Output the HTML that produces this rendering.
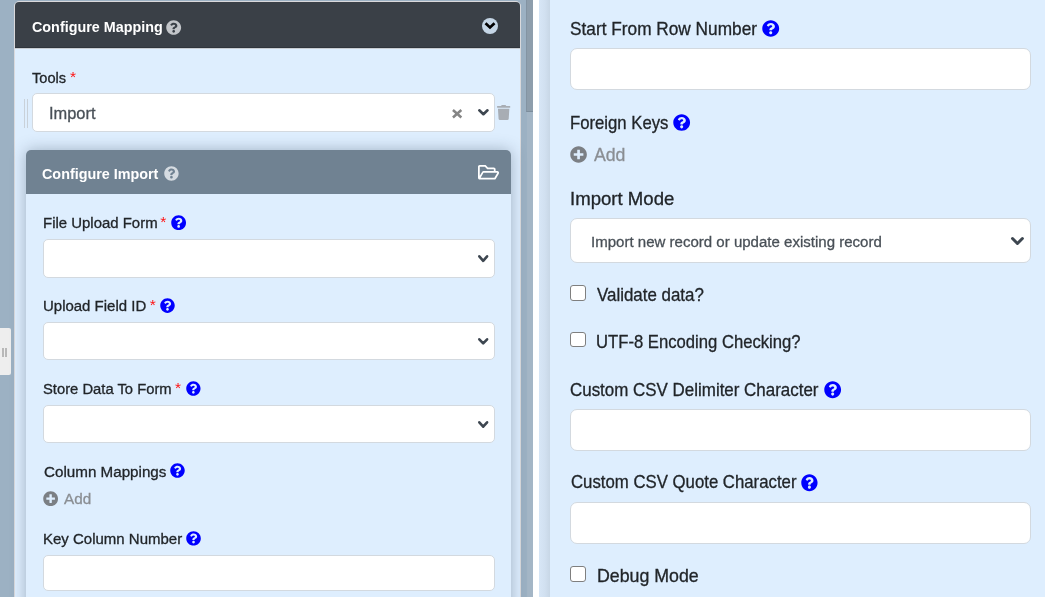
<!DOCTYPE html>
<html><head><meta charset="utf-8"><style>
*{margin:0;padding:0;box-sizing:border-box}
html,body{width:1045px;height:597px;overflow:hidden;background:#deeefe;font-family:"Liberation Sans",sans-serif;color:#212529}
.abs{position:absolute}
.t{position:absolute;white-space:nowrap;line-height:1;transform:translateZ(0);transform-origin:0 0;-webkit-text-stroke:0.3px currentColor}
.b{font-weight:bold;-webkit-text-stroke:0}
.inp{position:absolute;background:#fff;border:1px solid #d3d9df;border-radius:5px}
.cb{position:absolute;background:#fff;border:1.4px solid #7f7f7f;border-radius:3px}
svg{position:absolute;overflow:visible}
</style></head><body>
<div class="abs" style="left:0;top:0;width:527px;height:597px;background:#9cb1c3"></div>
<div class="abs" style="left:526.5px;top:0;width:6.5px;height:597px;background:#a4b6c6"></div>
<div class="abs" style="left:526px;top:0;width:7px;height:112px;background:#8e9eac;border-left:1px solid #8394a3;border-bottom:1px solid #7c8d9c"></div>
<div class="abs" style="left:533px;top:0;width:6px;height:597px;background:#fff"></div>
<div class="abs" style="left:539px;top:0;width:506px;height:597px;background:linear-gradient(90deg,#d7e6f6 0px,#d1e0f0 6px,#c8d7e6 11px,#deeefe 11px)"></div>
<div class="abs" style="left:0;top:328px;width:10.5px;height:47px;background:#eeeeee;border-radius:0 2px 2px 0"></div>
<div class="abs" style="left:2px;top:348px;width:1.5px;height:8.5px;background:#b8b8b8"></div>
<div class="abs" style="left:5.3px;top:348px;width:1.5px;height:8.5px;background:#b8b8b8"></div>
<div class="abs" style="left:14px;top:1px;width:507px;height:620px;background:#deeefe;border:1px solid #d9d9dc;border-radius:5px;overflow:hidden"><div class="abs" style="left:0;top:0;width:100%;height:46px;background:#3a4047;border-bottom:1px solid #2f353c"></div><div class="abs" style="left:0;top:46px;width:100%;height:1px;background:#c8cdd2"></div></div>
<div class="t b" style="left:31.77px;top:20.43px;font-size:14.2px;color:#ffffff;transform:translateZ(0) scaleX(1.0111)">Configure Mapping</div>
<svg style="left:166.26px;top:20.26px" width="15.38" height="15.07" viewBox="0 0 512 512" preserveAspectRatio="none"><path fill="#c2c5c9" d="M504 256c0 136.997-111.043 248-248 248S8 392.997 8 256C8 119.083 119.043 8 256 8s248 111.083 248 248zM262.655 90c-54.497 0-89.255 22.957-116.549 63.758-3.536 5.286-2.353 12.415 2.715 16.258l34.699 26.31c5.205 3.947 12.621 3.008 16.665-2.122 17.864-22.658 30.113-35.797 57.303-35.797 20.429 0 45.698 13.148 45.698 32.958 0 14.976-12.363 22.667-32.534 33.976C247.128 238.528 216 254.941 216 296v4c0 6.627 5.373 12 12 12h56c6.627 0 12-5.373 12-12v-1.333c0-28.462 83.186-29.647 83.186-106.667 0-58.002-60.165-102-116.531-102zM256 338c-25.365 0-46 20.635-46 46 0 25.364 20.635 46 46 46s46-20.636 46-46c0-25.365-20.635-46-46-46z"/></svg>
<svg style="left:482px;top:17.6px" width="16" height="16" viewBox="0 0 16 16"><circle cx="8" cy="8" r="8" fill="#c5d6e6"/><path d="M3.5 5.2 L8 9.5 L12.5 5.2" fill="none" stroke="#000" stroke-width="2.7"/></svg>
<div class="t r" style="left:31.96px;top:69.69px;font-size:15.2px;color:#212529;transform:translateZ(0) scaleX(0.9626)">Tools</div>
<div class="t" style="left:70.00px;top:69.00px;font-size:15.5px;color:#ff1010;-webkit-text-stroke:0">*</div>
<div class="abs" style="left:24px;top:99px;width:1px;height:29px;background:#c9d1d9"></div>
<div class="abs" style="left:27px;top:99px;width:1px;height:29px;background:#c9d1d9"></div>
<div class="inp" style="left:32px;top:93px;width:463px;height:39px"></div>
<div class="t r" style="left:48.99px;top:105.58px;font-size:15.9px;color:#495057;transform:translateZ(0) scaleX(1.0320)">Import</div>
<svg style="left:451.5px;top:108.8px" width="10.3" height="9.5" viewBox="0 0 10.3 9.5"><path d="M0.95 0.95L9.35 8.55M9.35 0.95L0.95 8.55" stroke="#858585" stroke-width="2.5"/></svg>
<svg style="left:478px;top:109.4px" width="10.80" height="6.50" viewBox="0 0 10.80 6.50"><path d="M1.30 1.30L5.40 5.20L9.50 1.30" fill="none" stroke="#3d4650" stroke-width="2.6" stroke-linecap="round" stroke-linejoin="round"/></svg>
<svg style="left:497px;top:105px" width="13.3" height="15" viewBox="0 0 448 512" preserveAspectRatio="none"><path fill="#a8adb4" d="M432 32H312l-9.4-18.7A24 24 0 0 0 281.1 0H166.8a23.72 23.72 0 0 0-21.4 13.3L136 32H16A16 16 0 0 0 0 48v32a16 16 0 0 0 16 16h416a16 16 0 0 0 16-16V48a16 16 0 0 0-16-16zM53.2 467a48 48 0 0 0 47.9 45h245.8a48 48 0 0 0 47.9-45L416 128H32z"/></svg>
<div class="abs" style="left:26px;top:150px;width:485px;height:500px;background:#deeefe;border-radius:5px;box-shadow:0 0 15px rgba(40,60,80,.34)"><div class="abs" style="left:0;top:0;width:100%;height:44px;background:#708292;border-radius:5px 5px 0 0"></div></div>
<div class="t b" style="left:42.35px;top:166.93px;font-size:14.2px;color:#ffffff;transform:translateZ(0) scaleX(1.0116)">Configure Import</div>
<svg style="left:163.77px;top:165.87px" width="14.86" height="14.86" viewBox="0 0 512 512" preserveAspectRatio="none"><path fill="#d5dbe1" d="M504 256c0 136.997-111.043 248-248 248S8 392.997 8 256C8 119.083 119.043 8 256 8s248 111.083 248 248zM262.655 90c-54.497 0-89.255 22.957-116.549 63.758-3.536 5.286-2.353 12.415 2.715 16.258l34.699 26.31c5.205 3.947 12.621 3.008 16.665-2.122 17.864-22.658 30.113-35.797 57.303-35.797 20.429 0 45.698 13.148 45.698 32.958 0 14.976-12.363 22.667-32.534 33.976C247.128 238.528 216 254.941 216 296v4c0 6.627 5.373 12 12 12h56c6.627 0 12-5.373 12-12v-1.333c0-28.462 83.186-29.647 83.186-106.667 0-58.002-60.165-102-116.531-102zM256 338c-25.365 0-46 20.635-46 46 0 25.364 20.635 46 46 46s46-20.636 46-46c0-25.365-20.635-46-46-46z"/></svg>
<svg style="left:478.2px;top:164.9px" width="21.1" height="14.5" viewBox="0 64 576 384" preserveAspectRatio="none"><path fill="#fff" d="M527.9 224H480v-48c0-26.5-21.5-48-48-48H272l-64-64H48C21.5 64 0 85.5 0 112v288c0 26.5 21.5 48 48 48h400c16.5 0 31.9-8.5 40.7-22.6l79.9-128c20-31.9-3-73.4-40.7-73.4zM48 118c0-3.3 2.7-6 6-6h134.1l64 64H426c3.3 0 6 2.7 6 6v42H152c-16.8 0-32.4 8.8-41.1 23.2L48 351.4zm400 282H72l77.2-128H528z"/></svg>
<div class="t r" style="left:42.54px;top:214.87px;font-size:15.2px;color:#212529;transform:translateZ(0) scaleX(0.9840)">File Upload Form</div>
<div class="t" style="left:160.30px;top:213.90px;font-size:15.5px;color:#ff1010;-webkit-text-stroke:0">*</div>
<svg style="left:171.06px;top:214.76px" width="15.28" height="15.28" viewBox="0 0 512 512" preserveAspectRatio="none"><path fill="#0000ff" d="M504 256c0 136.997-111.043 248-248 248S8 392.997 8 256C8 119.083 119.043 8 256 8s248 111.083 248 248zM262.655 90c-54.497 0-89.255 22.957-116.549 63.758-3.536 5.286-2.353 12.415 2.715 16.258l34.699 26.31c5.205 3.947 12.621 3.008 16.665-2.122 17.864-22.658 30.113-35.797 57.303-35.797 20.429 0 45.698 13.148 45.698 32.958 0 14.976-12.363 22.667-32.534 33.976C247.128 238.528 216 254.941 216 296v4c0 6.627 5.373 12 12 12h56c6.627 0 12-5.373 12-12v-1.333c0-28.462 83.186-29.647 83.186-106.667 0-58.002-60.165-102-116.531-102zM256 338c-25.365 0-46 20.635-46 46 0 25.364 20.635 46 46 46s46-20.636 46-46c0-25.365-20.635-46-46-46z"/></svg>
<div class="inp" style="left:43px;top:239px;width:452px;height:39px"></div>
<svg style="left:478.2px;top:254.6px" width="10.40" height="7.10" viewBox="0 0 10.40 7.10"><path d="M1.30 1.30L5.20 5.80L9.10 1.30" fill="none" stroke="#3d4650" stroke-width="2.6" stroke-linecap="round" stroke-linejoin="round"/></svg>
<div class="t r" style="left:42.64px;top:297.57px;font-size:15.2px;color:#212529;transform:translateZ(0) scaleX(0.9859)">Upload Field ID</div>
<div class="t" style="left:149.70px;top:296.90px;font-size:15.5px;color:#ff1010;-webkit-text-stroke:0">*</div>
<svg style="left:160.37px;top:297.66px" width="14.97" height="15.17" viewBox="0 0 512 512" preserveAspectRatio="none"><path fill="#0000ff" d="M504 256c0 136.997-111.043 248-248 248S8 392.997 8 256C8 119.083 119.043 8 256 8s248 111.083 248 248zM262.655 90c-54.497 0-89.255 22.957-116.549 63.758-3.536 5.286-2.353 12.415 2.715 16.258l34.699 26.31c5.205 3.947 12.621 3.008 16.665-2.122 17.864-22.658 30.113-35.797 57.303-35.797 20.429 0 45.698 13.148 45.698 32.958 0 14.976-12.363 22.667-32.534 33.976C247.128 238.528 216 254.941 216 296v4c0 6.627 5.373 12 12 12h56c6.627 0 12-5.373 12-12v-1.333c0-28.462 83.186-29.647 83.186-106.667 0-58.002-60.165-102-116.531-102zM256 338c-25.365 0-46 20.635-46 46 0 25.364 20.635 46 46 46s46-20.636 46-46c0-25.365-20.635-46-46-46z"/></svg>
<div class="inp" style="left:43px;top:322px;width:452px;height:38px"></div>
<svg style="left:478.2px;top:338px" width="10.40" height="6.70" viewBox="0 0 10.40 6.70"><path d="M1.30 1.30L5.20 5.40L9.10 1.30" fill="none" stroke="#3d4650" stroke-width="2.6" stroke-linecap="round" stroke-linejoin="round"/></svg>
<div class="t r" style="left:42.84px;top:380.53px;font-size:15.2px;color:#212529;transform:translateZ(0) scaleX(0.9726)">Store Data To Form</div>
<div class="t" style="left:174.90px;top:379.90px;font-size:15.5px;color:#ff1010;-webkit-text-stroke:0">*</div>
<svg style="left:185.57px;top:380.66px" width="14.76" height="15.07" viewBox="0 0 512 512" preserveAspectRatio="none"><path fill="#0000ff" d="M504 256c0 136.997-111.043 248-248 248S8 392.997 8 256C8 119.083 119.043 8 256 8s248 111.083 248 248zM262.655 90c-54.497 0-89.255 22.957-116.549 63.758-3.536 5.286-2.353 12.415 2.715 16.258l34.699 26.31c5.205 3.947 12.621 3.008 16.665-2.122 17.864-22.658 30.113-35.797 57.303-35.797 20.429 0 45.698 13.148 45.698 32.958 0 14.976-12.363 22.667-32.534 33.976C247.128 238.528 216 254.941 216 296v4c0 6.627 5.373 12 12 12h56c6.627 0 12-5.373 12-12v-1.333c0-28.462 83.186-29.647 83.186-106.667 0-58.002-60.165-102-116.531-102zM256 338c-25.365 0-46 20.635-46 46 0 25.364 20.635 46 46 46s46-20.636 46-46c0-25.365-20.635-46-46-46z"/></svg>
<div class="inp" style="left:43px;top:405px;width:452px;height:38px"></div>
<svg style="left:478.2px;top:420.7px" width="10.40" height="7.00" viewBox="0 0 10.40 7.00"><path d="M1.30 1.30L5.20 5.70L9.10 1.30" fill="none" stroke="#3d4650" stroke-width="2.6" stroke-linecap="round" stroke-linejoin="round"/></svg>
<div class="t r" style="left:43.78px;top:463.75px;font-size:15.2px;color:#212529;transform:translateZ(0) scaleX(0.9998)">Column Mappings</div>
<svg style="left:169.67px;top:463.36px" width="14.97" height="15.07" viewBox="0 0 512 512" preserveAspectRatio="none"><path fill="#0000ff" d="M504 256c0 136.997-111.043 248-248 248S8 392.997 8 256C8 119.083 119.043 8 256 8s248 111.083 248 248zM262.655 90c-54.497 0-89.255 22.957-116.549 63.758-3.536 5.286-2.353 12.415 2.715 16.258l34.699 26.31c5.205 3.947 12.621 3.008 16.665-2.122 17.864-22.658 30.113-35.797 57.303-35.797 20.429 0 45.698 13.148 45.698 32.958 0 14.976-12.363 22.667-32.534 33.976C247.128 238.528 216 254.941 216 296v4c0 6.627 5.373 12 12 12h56c6.627 0 12-5.373 12-12v-1.333c0-28.462 83.186-29.647 83.186-106.667 0-58.002-60.165-102-116.531-102zM256 338c-25.365 0-46 20.635-46 46 0 25.364 20.635 46 46 46s46-20.636 46-46c0-25.365-20.635-46-46-46z"/></svg>
<svg style="left:43.16px;top:491.06px" width="15.28" height="15.28" viewBox="0 0 512 512" preserveAspectRatio="none"><path fill="#7b7f84" d="M256 8C119 8 8 119 8 256s111 248 248 248 248-111 248-248S393 8 256 8zm144 276c0 6.6-5.4 12-12 12h-92v92c0 6.6-5.4 12-12 12h-56c-6.6 0-12-5.4-12-12v-92h-92c-6.6 0-12-5.4-12-12v-56c0-6.6 5.4-12 12-12h92v-92c0-6.6 5.4-12 12-12h56c6.6 0 12 5.4 12 12v92h92c6.6 0 12 5.4 12 12v56z"/></svg>
<div class="t r" style="left:63.84px;top:490.67px;font-size:15.2px;color:#8a8e93;transform:translateZ(0) scaleX(1.0081)">Add</div>
<div class="t r" style="left:43.47px;top:530.54px;font-size:15.2px;color:#212529;transform:translateZ(0) scaleX(0.9870)">Key Column Number</div>
<svg style="left:186.06px;top:530.67px" width="15.07" height="14.76" viewBox="0 0 512 512" preserveAspectRatio="none"><path fill="#0000ff" d="M504 256c0 136.997-111.043 248-248 248S8 392.997 8 256C8 119.083 119.043 8 256 8s248 111.083 248 248zM262.655 90c-54.497 0-89.255 22.957-116.549 63.758-3.536 5.286-2.353 12.415 2.715 16.258l34.699 26.31c5.205 3.947 12.621 3.008 16.665-2.122 17.864-22.658 30.113-35.797 57.303-35.797 20.429 0 45.698 13.148 45.698 32.958 0 14.976-12.363 22.667-32.534 33.976C247.128 238.528 216 254.941 216 296v4c0 6.627 5.373 12 12 12h56c6.627 0 12-5.373 12-12v-1.333c0-28.462 83.186-29.647 83.186-106.667 0-58.002-60.165-102-116.531-102zM256 338c-25.365 0-46 20.635-46 46 0 25.364 20.635 46 46 46s46-20.636 46-46c0-25.365-20.635-46-46-46z"/></svg>
<div class="inp" style="left:43px;top:555px;width:452px;height:36px"></div>
<div class="t r" style="left:570.08px;top:21.24px;font-size:17.7px;color:#212529;transform:translateZ(0) scaleX(0.9757)">Start From Row Number</div>
<svg style="left:761.93px;top:20.33px" width="17.45" height="17.03" viewBox="0 0 512 512" preserveAspectRatio="none"><path fill="#0000ff" d="M504 256c0 136.997-111.043 248-248 248S8 392.997 8 256C8 119.083 119.043 8 256 8s248 111.083 248 248zM262.655 90c-54.497 0-89.255 22.957-116.549 63.758-3.536 5.286-2.353 12.415 2.715 16.258l34.699 26.31c5.205 3.947 12.621 3.008 16.665-2.122 17.864-22.658 30.113-35.797 57.303-35.797 20.429 0 45.698 13.148 45.698 32.958 0 14.976-12.363 22.667-32.534 33.976C247.128 238.528 216 254.941 216 296v4c0 6.627 5.373 12 12 12h56c6.627 0 12-5.373 12-12v-1.333c0-28.462 83.186-29.647 83.186-106.667 0-58.002-60.165-102-116.531-102zM256 338c-25.365 0-46 20.635-46 46 0 25.364 20.635 46 46 46s46-20.636 46-46c0-25.365-20.635-46-46-46z"/></svg>
<div class="inp" style="left:570px;top:48px;width:461px;height:42px;border-radius:7px"></div>
<div class="t r" style="left:570.17px;top:114.51px;font-size:17.7px;color:#212529;transform:translateZ(0) scaleX(0.9449)">Foreign Keys</div>
<svg style="left:673.03px;top:113.53px" width="17.34" height="17.14" viewBox="0 0 512 512" preserveAspectRatio="none"><path fill="#0000ff" d="M504 256c0 136.997-111.043 248-248 248S8 392.997 8 256C8 119.083 119.043 8 256 8s248 111.083 248 248zM262.655 90c-54.497 0-89.255 22.957-116.549 63.758-3.536 5.286-2.353 12.415 2.715 16.258l34.699 26.31c5.205 3.947 12.621 3.008 16.665-2.122 17.864-22.658 30.113-35.797 57.303-35.797 20.429 0 45.698 13.148 45.698 32.958 0 14.976-12.363 22.667-32.534 33.976C247.128 238.528 216 254.941 216 296v4c0 6.627 5.373 12 12 12h56c6.627 0 12-5.373 12-12v-1.333c0-28.462 83.186-29.647 83.186-106.667 0-58.002-60.165-102-116.531-102zM256 338c-25.365 0-46 20.635-46 46 0 25.364 20.635 46 46 46s46-20.636 46-46c0-25.365-20.635-46-46-46z"/></svg>
<svg style="left:570.23px;top:145.73px" width="17.14" height="17.03" viewBox="0 0 512 512" preserveAspectRatio="none"><path fill="#7b7f84" d="M256 8C119 8 8 119 8 256s111 248 248 248 248-111 248-248S393 8 256 8zm144 276c0 6.6-5.4 12-12 12h-92v92c0 6.6-5.4 12-12 12h-56c-6.6 0-12-5.4-12-12v-92h-92c-6.6 0-12-5.4-12-12v-56c0-6.6 5.4-12 12-12h92v-92c0-6.6 5.4-12 12-12h56c6.6 0 12 5.4 12 12v92h92c6.6 0 12 5.4 12 12v56z"/></svg>
<div class="t r" style="left:594.05px;top:146.84px;font-size:17.7px;color:#8a8e93;transform:translateZ(0) scaleX(0.9986)">Add</div>
<div class="t r" style="left:569.80px;top:191.16px;font-size:17.7px;color:#212529;transform:translateZ(0) scaleX(1.0510)">Import Mode</div>
<div class="inp" style="left:570px;top:218px;width:461px;height:45px;border-radius:7px"></div>
<div class="t r" style="left:591.07px;top:233.86px;font-size:15.5px;color:#495057;transform:translateZ(0) scaleX(0.9700)">Import new record or update existing record</div>
<svg style="left:1011.1px;top:237px" width="12.90" height="8.00" viewBox="0 0 12.90 8.00"><path d="M1.50 1.50L6.45 6.50L11.40 1.50" fill="none" stroke="#3d4650" stroke-width="3.0" stroke-linecap="round" stroke-linejoin="round"/></svg>
<div class="cb" style="left:570.4px;top:285.4px;width:15.3px;height:15.2px"></div>
<div class="t r" style="left:597.13px;top:287.32px;font-size:17.7px;color:#212529;transform:translateZ(0) scaleX(0.9557)">Validate data?</div>
<div class="cb" style="left:570.4px;top:332.3px;width:15.3px;height:15.2px"></div>
<div class="t r" style="left:596.02px;top:333.55px;font-size:17.7px;color:#212529;transform:translateZ(0) scaleX(0.9417)">UTF-8 Encoding Checking?</div>
<div class="t r" style="left:569.57px;top:381.70px;font-size:17.7px;color:#212529;transform:translateZ(0) scaleX(0.9576)">Custom CSV Delimiter Character</div>
<svg style="left:823.53px;top:380.73px" width="17.34" height="17.45" viewBox="0 0 512 512" preserveAspectRatio="none"><path fill="#0000ff" d="M504 256c0 136.997-111.043 248-248 248S8 392.997 8 256C8 119.083 119.043 8 256 8s248 111.083 248 248zM262.655 90c-54.497 0-89.255 22.957-116.549 63.758-3.536 5.286-2.353 12.415 2.715 16.258l34.699 26.31c5.205 3.947 12.621 3.008 16.665-2.122 17.864-22.658 30.113-35.797 57.303-35.797 20.429 0 45.698 13.148 45.698 32.958 0 14.976-12.363 22.667-32.534 33.976C247.128 238.528 216 254.941 216 296v4c0 6.627 5.373 12 12 12h56c6.627 0 12-5.373 12-12v-1.333c0-28.462 83.186-29.647 83.186-106.667 0-58.002-60.165-102-116.531-102zM256 338c-25.365 0-46 20.635-46 46 0 25.364 20.635 46 46 46s46-20.636 46-46c0-25.365-20.635-46-46-46z"/></svg>
<div class="inp" style="left:570px;top:409px;width:461px;height:42px;border-radius:7px"></div>
<div class="t r" style="left:570.61px;top:474.22px;font-size:17.7px;color:#212529;transform:translateZ(0) scaleX(0.9478)">Custom CSV Quote Character</div>
<svg style="left:800.64px;top:473.53px" width="16.83" height="17.55" viewBox="0 0 512 512" preserveAspectRatio="none"><path fill="#0000ff" d="M504 256c0 136.997-111.043 248-248 248S8 392.997 8 256C8 119.083 119.043 8 256 8s248 111.083 248 248zM262.655 90c-54.497 0-89.255 22.957-116.549 63.758-3.536 5.286-2.353 12.415 2.715 16.258l34.699 26.31c5.205 3.947 12.621 3.008 16.665-2.122 17.864-22.658 30.113-35.797 57.303-35.797 20.429 0 45.698 13.148 45.698 32.958 0 14.976-12.363 22.667-32.534 33.976C247.128 238.528 216 254.941 216 296v4c0 6.627 5.373 12 12 12h56c6.627 0 12-5.373 12-12v-1.333c0-28.462 83.186-29.647 83.186-106.667 0-58.002-60.165-102-116.531-102zM256 338c-25.365 0-46 20.635-46 46 0 25.364 20.635 46 46 46s46-20.636 46-46c0-25.365-20.635-46-46-46z"/></svg>
<div class="inp" style="left:570px;top:502px;width:461px;height:42px;border-radius:7px"></div>
<div class="cb" style="left:570.3px;top:566.3px;width:15.5px;height:15.5px"></div>
<div class="t r" style="left:596.83px;top:567.52px;font-size:17.7px;color:#212529;transform:translateZ(0) scaleX(1.0047)">Debug Mode</div>
</body></html>
